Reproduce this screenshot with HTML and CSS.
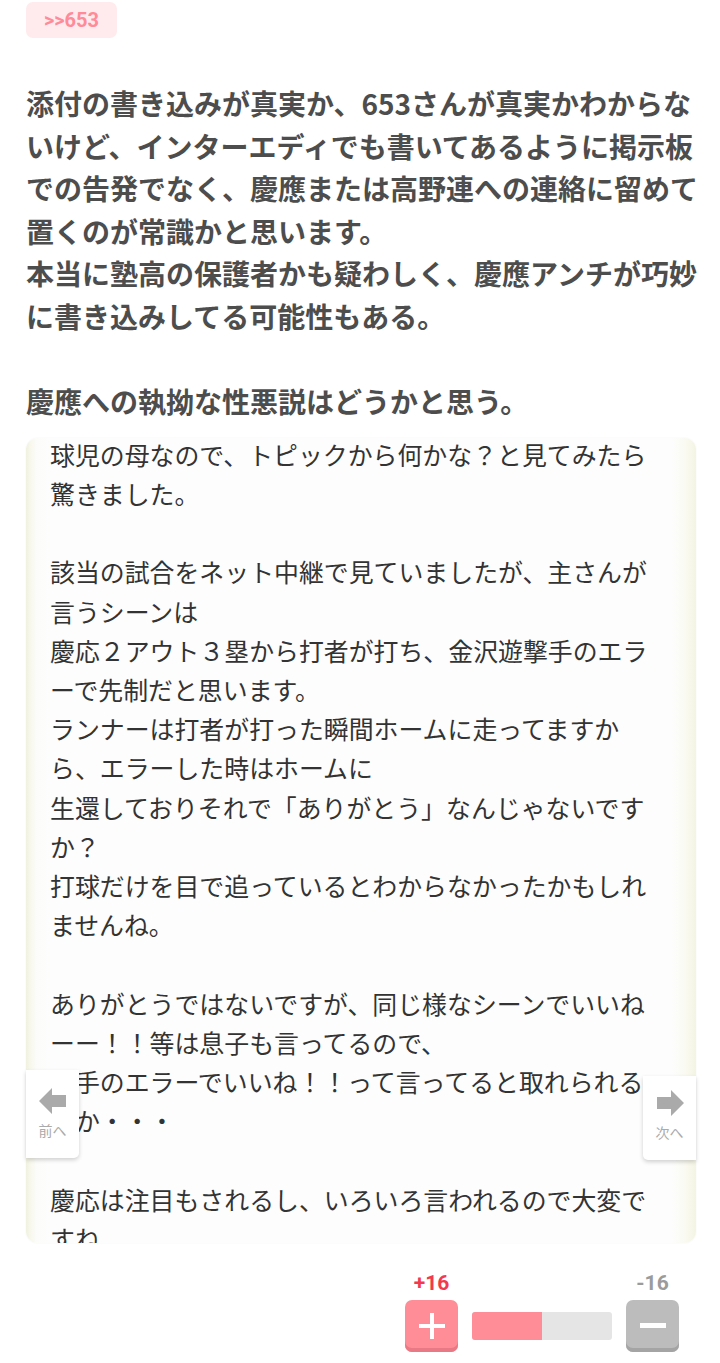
FILE: index.html
```html
<!DOCTYPE html>
<html lang="ja">
<head>
<meta charset="utf-8">
<link rel="stylesheet" href="styles.css">
</head>
<body>
<div class="page">
  <div class="anchor-row"><span class="anchor">&gt;&gt;653</span></div>
  <div class="comment">添付の書き込みが真実か、653さんが真実かわからな<br>いけど、インターエディでも書いてあるように掲示板<br>での告発でなく、慶應または高野連への連絡に留めて<br>置くのが常識かと思います。<br>本当に塾高の保護者かも疑わしく、慶應アンチが巧妙<br>に書き込みしてる可能性もある。<br><br>慶應への執拗な性悪説はどうかと思う。</div>
  <div class="quote-wrap">
    <div class="quote">
      <div class="quote-text">球児の母なので、トピックから何かな？と見てみたら<br>驚きました。<br><br>該当の試合をネット中継で見ていましたが、主さんが<br>言うシーンは<br>慶応２アウト３塁から打者が打ち、金沢遊撃手のエラ<br>ーで先制だと思います。<br>ランナーは打者が打った瞬間ホームに走ってますか<br>ら、エラーした時はホームに<br>生還しておりそれで「ありがとう」なんじゃないです<br>か？<br>打球だけを目で追っているとわからなかったかもしれ<br>ませんね。<br><br>ありがとうではないですが、同じ様なシーンでいいね<br>ーー！！等は息子も言ってるので、<br>相手のエラーでいいね！！って言ってると取れられる<br>　か・・・<br><br>慶応は注目もされるし、いろいろ言われるので大変で<br>すね</div>
    </div>
    <div class="nav nav-prev">
      <svg width="28" height="26" viewBox="0 0 28 26"><path d="M0 13 L13 0 L13 7 L27 7 L27 19 L13 19 L13 26 Z" fill="#aaaaaa"/></svg>
      <span>前へ</span>
    </div>
    <div class="nav nav-next">
      <svg width="28" height="26" viewBox="0 0 28 26"><path d="M28 13 L15 0 L15 7 L1 7 L1 19 L15 19 L15 26 Z" fill="#aaaaaa"/></svg>
      <span>次へ</span>
    </div>
  </div>
  <div class="vote">
    <div class="vote-col">
      <span class="count plus-count">+16</span>
      <button class="btn btn-plus"><svg width="26" height="26" viewBox="0 0 26 26"><path d="M11 0h4v11h11v4H15v11h-4V15H0v-4h11z" fill="#fff"/></svg></button>
    </div>
    <div class="bar"><div class="bar-fill" style="width:50%"></div></div>
    <div class="vote-col">
      <span class="count minus-count">-16</span>
      <button class="btn btn-minus"><svg width="26" height="6" viewBox="0 0 26 6"><rect width="26" height="5" fill="#fff"/></svg></button>
    </div>
  </div>
</div>
</body>
</html>
```
FILE: styles.css
```css
* { box-sizing: border-box; }
html, body { margin: 0; padding: 0; background: #fff; }
body {
  font-family: "Noto Sans CJK JP", "Noto Sans", sans-serif;
  width: 720px;
  height: 1363px;
  overflow: hidden;
}
.page { padding: 2px 0 0 0; }
.anchor-row { padding-left: 26px; height: 36px; }
.anchor {
  display: inline-flex;
  align-items: center;
  justify-content: center;
  width: 91px;
  height: 36px;
  background: #ffebee;
  color: #ff8a98;
  border-radius: 7px;
  font-family: Roboto, "Noto Sans", sans-serif;
  font-weight: 700;
  font-size: 20px;
}
.comment {
  margin-top: 44px;
  padding-left: 26px;
  font-size: 28px;
  line-height: 42.6px;
  font-weight: 700;
  color: #4d4d4d;
  white-space: nowrap;
}
.quote-wrap {
  position: relative;
  margin: 15px 24px 0 26px;
}
.quote {
  height: 805px;
  overflow: hidden;
  border-radius: 12px;
  background: linear-gradient(to right, #f1f1df 0, #f8f8ee 5px, #fcfcfa 11px, #fdfdfd 24px, #fdfdfd calc(100% - 24px), #fafaf2 calc(100% - 11px), #f4f4e4 100%);
  box-shadow: 0 0 2px rgba(0,0,0,0.06);
}
.quote-text {
  margin-top: -3px;
  padding-left: 24px;
  font-size: 24.9px;
  line-height: 39.2px;
  color: #333;
  white-space: nowrap;
}
.nav {
  position: absolute;
  width: 53px;
  height: 88px;
  background: #fff;
  display: flex;
  flex-direction: column;
  align-items: center;
  padding-top: 18px;
  gap: 8px;
  box-shadow: 0 2px 4px rgba(0,0,0,0.18);
}
.nav span {
  font-size: 14px;
  color: #aaa;
  line-height: 16px;
}
.nav-prev { left: 0; top: 632px; border-radius: 0 0 5px 0; }
.nav-next { right: 0; top: 638px; height: 84px; border-radius: 0 0 0 5px; padding-top: 14px; }
.vote {
  display: flex;
  justify-content: flex-end;
  align-items: flex-end;
  gap: 14px;
  padding-right: 41px;
  margin-top: 27px;
}
.vote-col {
  display: flex;
  flex-direction: column;
  align-items: center;
  gap: 4px;
}
.count {
  font-family: Roboto, "Noto Sans", sans-serif;
  font-weight: 700;
  font-size: 21px;
  line-height: 26px;
}
.plus-count { color: #f23a4e; }
.minus-count { color: #9b9b9b; }
.btn {
  width: 53px;
  height: 52px;
  border: none;
  border-radius: 7px;
  padding: 0;
  display: flex;
  align-items: center;
  justify-content: center;
  margin: 0;
}
.btn-plus { background: #ff8d97; box-shadow: inset 0 -4px 0 #e97985; }
.btn-minus { background: #bcbcbc; box-shadow: inset 0 -4px 0 #a4a4a4; }
.bar {
  width: 140px;
  height: 28px;
  background: #e5e5e5;
  border-radius: 3px;
  overflow: hidden;
  margin-bottom: 12px;
}
.bar-fill { height: 100%; background: #ff8d97; }
```
